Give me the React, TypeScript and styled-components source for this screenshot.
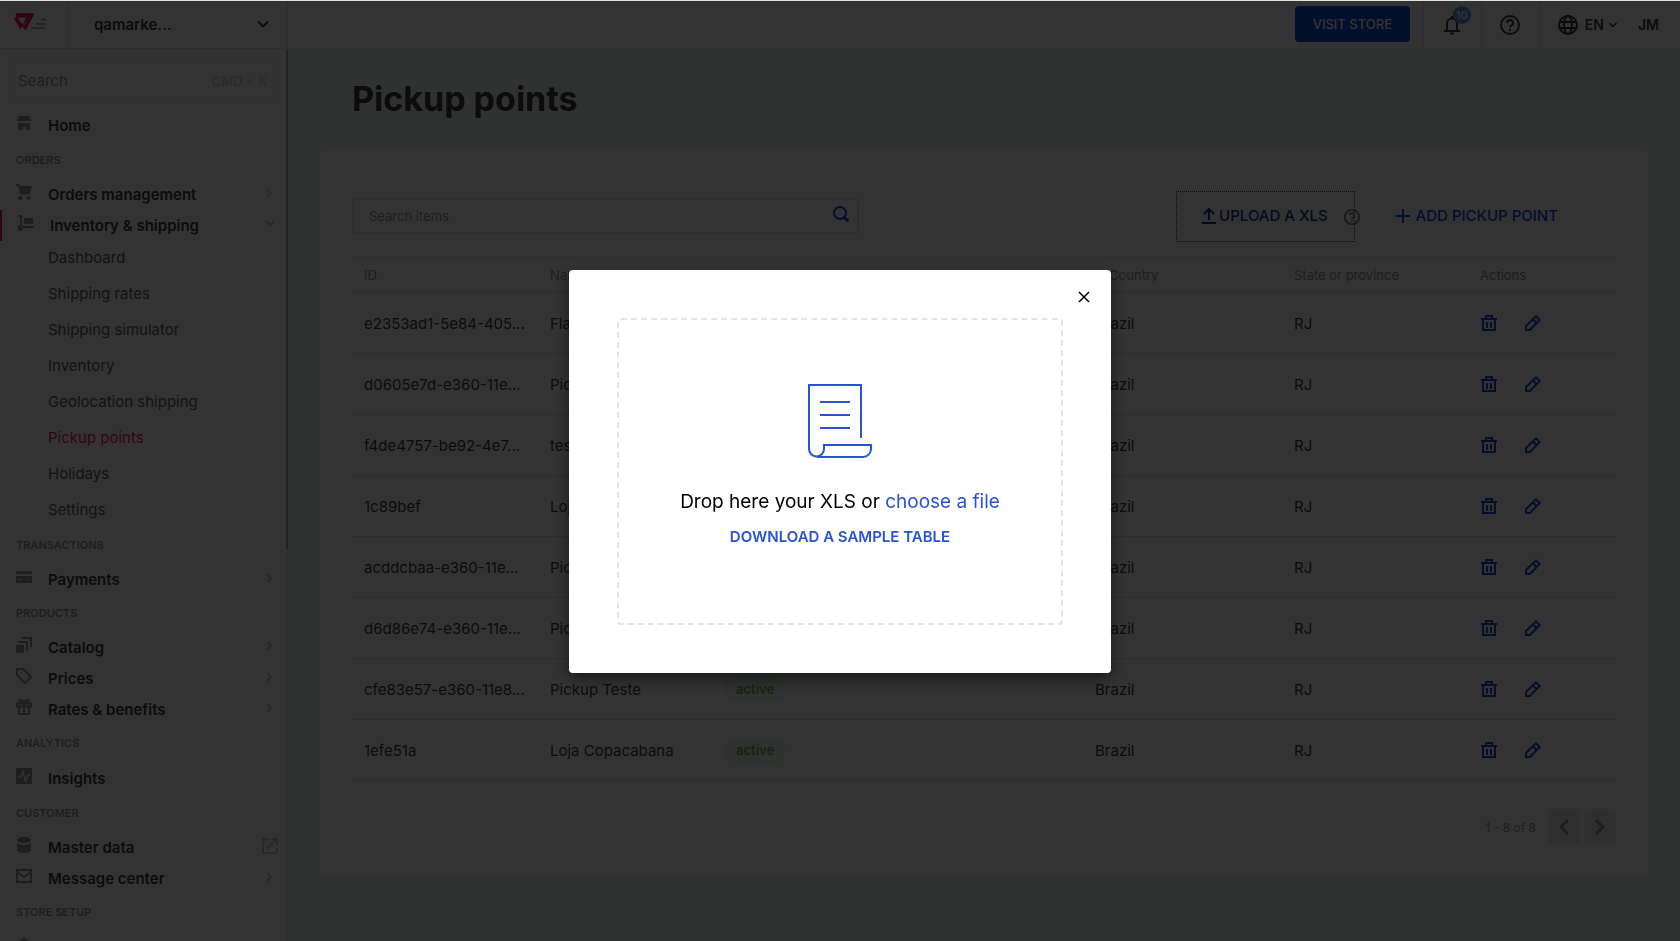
import React from "react";
import styled, { createGlobalStyle } from "styled-components";

const c = {
  text: "#3f3f40",
  soft: "#5e6062",
  muted: "#979899",
  faint: "#cacbcc",
  line: "#e3e4e6",
  blue: "#134cd8",
  blueDark: "#0c389f",
  link: "#2953d4",
  pink: "#f71963",
  base: "#f0f4f3",
};

const GlobalStyle = createGlobalStyle`
  * { box-sizing: border-box; }
  body { margin: 0; background: ${c.base}; color: ${c.text}; font-family: Inter, "Liberation Sans", sans-serif; font-size: 15px; }
  button, input { font: inherit; color: inherit; }
  button { background: none; border: 0; padding: 0; cursor: pointer; }
  a { color: inherit; text-decoration: none; }
  ul { list-style: none; margin: 0; padding: 0; }
  svg { display: block; flex: none; }
`;

const Shell = styled.div`
  height: 100vh;
  display: flex;
  flex-direction: column;
  overflow: hidden;
`;

const TopBar = styled.header`
  flex: none;
  height: 49px;
  display: flex;
  align-items: stretch;
  background: #fff;
  border-top: 1px solid #dfe4e2;
  border-bottom: 1px solid ${c.line};
`;

const LogoLink = styled.a`
  width: 68px;
  padding: 12px 0 0 14px;
  border-right: 1px solid ${c.line};
`;

const AccountButton = styled.button`
  width: 220px;
  padding: 0 18px 0 26px;
  display: flex;
  align-items: center;
  justify-content: space-between;
  border-right: 1px solid ${c.line};
  font-weight: 600;
`;

const TopActions = styled.div`
  margin-left: auto;
  display: flex;
  align-items: stretch;
`;

const VisitStore = styled.a`
  width: 115px;
  height: 36px;
  margin: 5px 13px 0 0;
  border-radius: 4px;
  background: ${c.blue};
  color: #fff;
  font-size: 13px;
  font-weight: 500;
  line-height: 36px;
  text-align: center;
`;

const IconCell = styled.button`
  position: relative;
  width: 58px;
  display: flex;
  align-items: center;
  justify-content: center;
  border-left: 1px solid ${c.line};
`;

const Count = styled.span`
  position: absolute;
  top: 5px;
  left: 29px;
  width: 18px;
  height: 18px;
  border-radius: 9px;
  background: #5a9ff5;
  color: #fff;
  font-size: 11px;
  font-weight: 500;
  line-height: 18px;
  text-align: center;
`;

const LangButton = styled.button`
  display: flex;
  align-items: center;
  gap: 5px;
  padding: 0 21px 0 18px;
  border-left: 1px solid ${c.line};
  font-size: 14px;
  font-weight: 600;
  svg:first-child { margin-right: 2px; }
`;

const UserButton = styled.button`
  padding-right: 21px;
  font-size: 14px;
  font-weight: 600;
`;

const Body = styled.div`
  flex: 1;
  min-height: 0;
  display: flex;
`;

const Sidebar = styled.aside`
  position: relative;
  flex: none;
  width: 288px;
  overflow: hidden;
  background: #fff;
  box-shadow: inset -1px 0 ${c.line};
`;

const ScrollThumb = styled.div`
  position: absolute;
  top: 0;
  right: 0;
  width: 2px;
  height: 56%;
  background: #a8a9aa;
`;

const SideSearch = styled.label`
  height: 37px;
  margin: 13px 9px 10px 9px;
  padding: 0 11px 0 8px;
  display: flex;
  align-items: center;
  border: 1px solid #edeeef;
  border-radius: 4px;
  input {
    flex: 1;
    min-width: 0;
    padding: 0;
    border: 0;
    outline: 0;
    background: none;
    &::placeholder { color: ${c.muted}; opacity: 1; }
  }
`;

const Shortcut = styled.span`
  color: #d4d5d6;
  font-size: 13px;
  font-weight: 600;
`;

const GroupLabel = styled.h2`
  margin: 0;
  padding: 10px 16px 11px;
  color: ${c.muted};
  font-size: 11px;
  font-weight: 600;
  line-height: 16px;
`;

const NavLink = styled.a<{ $single?: boolean; $active?: boolean }>`
  height: ${(p) => (p.$single ? 33 : 31)}px;
  padding: 0 10px 0 16px;
  border-left: ${(p) => (p.$active ? 2 : 0)}px solid ${c.pink};
  display: flex;
  align-items: center;
  gap: 16px;
  color: ${c.text};
  font-weight: 600;
`;

const NavIcon = styled.span`
  padding-bottom: 5px;
  color: ${c.muted};
`;

const NavTail = styled.span`
  width: 16px;
  margin-left: auto;
  padding-bottom: 3px;
  display: flex;
  justify-content: center;
  color: ${c.faint};
`;

const SubList = styled.ul`
  margin: -1px 0;
`;

const SubLink = styled.a<{ $current: boolean }>`
  display: block;
  padding-left: 48px;
  line-height: 36px;
  color: ${(p) => (p.$current ? c.pink : c.soft)};
`;

const Main = styled.main`
  flex: 1;
  min-width: 0;
  padding: 26px 32px 0;
`;

const Title = styled.h1`
  margin: 0 0 27px 32px;
  font-size: 34px;
  font-weight: 700;
  line-height: 48px;
`;

const Card = styled.section`
  padding: 41px 32px 32px;
  border-radius: 8px;
  background: #fff;
`;

const Toolbar = styled.div`
  display: flex;
  align-items: center;
  height: 51px;
  margin-bottom: 15px;
  padding-right: 58px;
`;

const TableSearch = styled.label`
  width: 42%;
  height: 36px;
  margin-bottom: 2px;
  padding: 0 8px 4px 15px;
  display: flex;
  align-items: center;
  border: 2px solid ${c.line};
  border-radius: 4px;
  color: ${c.blue};
  input {
    flex: 1;
    min-width: 0;
    padding: 4px 0 0;
    border: 0;
    outline: 0;
    background: none;
    color: ${c.text};
    font-size: 13px;
    &::placeholder { color: ${c.muted}; opacity: 1; }
  }
`;

const UploadButton = styled.button`
  height: 51px;
  margin-left: auto;
  padding: 0 26px 2px 25px;
  display: flex;
  align-items: center;
  gap: 3px;
  border: 1px dotted ${c.blueDark};
  color: ${c.blueDark};
  font-weight: 500;
`;

const HelpButton = styled.button`
  margin: 0 36px 0 -11px;
  color: #727273;
`;

const AddButton = styled.button`
  padding-bottom: 2px;
  display: flex;
  align-items: center;
  gap: 6px;
  color: ${c.blue};
  font-weight: 500;
`;

const Table = styled.table`
  width: 100%;
  table-layout: fixed;
  border-collapse: collapse;
  border-top: 1px solid ${c.line};
`;

const Col = styled.col<{ $w: number }>`
  width: ${(p) => p.$w}px;
`;

const Th = styled.th<{ $pad?: number }>`
  height: 35px;
  padding: 0 12px 0 ${(p) => p.$pad ?? 12}px;
  border-bottom: 1px solid ${c.line};
  color: ${c.muted};
  font-size: 13px;
  font-weight: 400;
  text-align: left;
`;

const Td = styled.td<{ $pad?: number }>`
  height: 61px;
  padding: 0 12px 0 ${(p) => p.$pad ?? 12}px;
  border-bottom: 1px solid ${c.line};
  overflow: hidden;
  white-space: nowrap;
`;

const Badge = styled.span`
  display: inline-block;
  padding: 0 12px;
  border-radius: 13px;
  background: #eef7ea;
  color: #79b03a;
  font-size: 13px;
  font-weight: 600;
  line-height: 25px;
`;

const RowActions = styled.div`
  display: flex;
  gap: 28px;
  padding-left: 1px;
  color: ${c.blue};
`;

const Pager = styled.nav`
  margin-top: 28px;
  display: flex;
  align-items: center;
  justify-content: flex-end;
  gap: 4px;
  color: #727273;
`;

const PagerCount = styled.span`
  margin-right: 8px;
  color: ${c.muted};
  font-size: 12px;
`;

const PageButton = styled.button`
  width: 32px;
  height: 36px;
  display: flex;
  align-items: center;
  justify-content: center;
  border-radius: 4px;
  background: #e3e9e7;
  color: ${c.muted};
`;

const Overlay = styled.div`
  position: fixed;
  inset: 1px 0 0;
  display: flex;
  align-items: center;
  justify-content: center;
  background: rgba(0, 0, 0, 0.8);
`;

const Modal = styled.div`
  position: relative;
  width: 542px;
  max-width: 100%;
  padding: 48px;
  border-radius: 4px;
  background: #fff;
  color: #000;
  box-shadow: 0 6px 16px rgba(0, 0, 0, 0.5);
`;

const CloseButton = styled.button`
  position: absolute;
  top: 19px;
  right: 19px;
  padding: 2px;
`;

const DropZone = styled.div`
  height: 307px;
  padding-top: 64px;
  display: flex;
  flex-direction: column;
  align-items: center;
  border: 2px dashed ${c.line};
  border-radius: 4px;
`;

const DropText = styled.p`
  margin: 30px 0 7px;
  font-size: 19px;
  line-height: 28px;
`;

const ChooseFile = styled.label`
  color: ${c.link};
  cursor: pointer;
  input { display: none; }
`;

const SampleLink = styled.a`
  color: ${c.link};
  font-weight: 600;
  line-height: 28px;
`;

type ChevronProps = { w: number; h: number; d: string; s?: number };
const Chevron = ({ w, h, d, s = 2 }: ChevronProps) => (
  <svg width={w} height={h} viewBox={`0 0 ${w} ${h}`} fill="none" stroke="currentColor" strokeWidth={s}>
    <path d={d} />
  </svg>
);

const Filled = ({ children }: { children: React.ReactNode }) => (
  <svg width="16" height="16" viewBox="0 0 16 16" fill="currentColor">{children}</svg>
);

const Outline = ({ children }: { children: React.ReactNode }) => (
  <svg width="16" height="16" viewBox="0 0 16 16" fill="none" stroke="currentColor" strokeWidth="2">{children}</svg>
);

const icons: Record<string, React.ReactNode> = {
  home: <Filled><path d="M3 1h10l2 5H1zM2 8h12v7H10v-3H7v3H2z" /></Filled>,
  cart: <Filled><path d="M0 0h3l1.3 2H16l-2.2 8.500H4.500L2 2H0z" /><circle cx="4.500" cy="14" r="2" /><circle cx="12.500" cy="14" r="2" /></Filled>,
  dolly: <Filled><path d="M0 0h4v11h12v2H5a3 3 0 1 1-3-3V2H0zM6 3h9v6H6z" /></Filled>,
  card: <Filled><path d="M0 2h16v3H0zM0 7h16v7H0zM2 10v1h4v-1zM12 10v1h2v-1z" fillRule="evenodd" /></Filled>,
  catalog: <Filled><path d="M0 8h8v8H1a1 1 0 0 1-1-1zM2 4h10v10h-2V6H2zM6 0h10v10h-2V2H6z" /></Filled>,
  tag: <Outline><path d="M1 1h6l8 8-6 6-8-8z" /><circle cx="5" cy="5" r="1" fill="currentColor" stroke="none" /></Outline>,
  gift: <Outline><path d="M1 4.500h14v3H1zM3 8v7h10V8M8 4v11M8 4C6 0 3 0 3.500 4M8 4c2-4 5-4 4.500 0" /></Outline>,
  pulse: <Filled><path d="M0 0h16v16H0z" /><path d="M2 9h2.500L7 4l2.500 9L12 7h2" fill="none" stroke="#fff" strokeWidth="1.500" /></Filled>,
  data: <Filled><ellipse cx="8" cy="3" rx="7" ry="3" /><path d="M1 6c3 2.500 11 2.500 14 0v7c-1 4-13 4-14 0z" /></Filled>,
  mail: <Outline><path d="M1 2h14v12H1zM1 4l7 5 7-5" /></Outline>,
  gear: <Filled><path d="M8 2l7 4v8l-7 4-7-4V6z" /></Filled>,
};

const chevronRight = <Chevron w={8} h={10} d="M1 1l4 4-4 4" />;
const chevronDown = <Chevron w={10} h={8} d="M1 1l4 4 4-4" />;
const external = (
  <Outline><path d="M6 1H1v14h14v-5M9 1h6v6M15 1L5 11" /></Outline>
);

const HelpIcon = ({ size }: { size: number }) => (
  <svg width={size} height={size} viewBox="0 0 20 20" fill="none" stroke="currentColor" strokeWidth="2">
    <circle cx="10" cy="10" r="9" />
    <path d="M7 8a3 3 0 1 1 4.500 2.500C10.300 11.200 10 11.600 10 12.500" />
    <path d="M10 14v2" />
  </svg>
);

type Item = { icon: string; label?: string; single?: boolean; active?: boolean; tail?: React.ReactNode; sub?: string[] };
type Group = { label?: string; items: Item[] };

const groups: Group[] = [
  { items: [{ icon: "home", label: "Home", single: true }] },
  {
    label: "ORDERS",
    items: [
      { icon: "cart", label: "Orders management", tail: chevronRight },
      {
        icon: "dolly", label: "Inventory & shipping", active: true, tail: chevronDown,
        sub: ["Dashboard", "Shipping rates", "Shipping simulator", "Inventory", "Geolocation shipping", "Pickup points", "Holidays", "Settings"],
      },
    ],
  },
  { label: "TRANSACTIONS", items: [{ icon: "card", label: "Payments", tail: chevronRight }] },
  {
    label: "PRODUCTS",
    items: [
      { icon: "catalog", label: "Catalog", tail: chevronRight },
      { icon: "tag", label: "Prices", tail: chevronRight },
      { icon: "gift", label: "Rates & benefits", tail: chevronRight },
    ],
  },
  { label: "ANALYTICS", items: [{ icon: "pulse", label: "Insights", single: true }] },
  {
    label: "CUSTOMER",
    items: [
      { icon: "data", label: "Master data", tail: external },
      { icon: "mail", label: "Message center", tail: chevronRight },
    ],
  },
  { label: "STORE SETUP", items: [{ icon: "gear" }] },
];

type Point = { id: string; name: string; status?: string };

const points: Point[] = [
  { id: "e2353ad1-5e84-405...", name: "Flamengo" },
  { id: "d0605e7d-e360-11e...", name: "Pickup" },
  { id: "f4de4757-be92-4e7...", name: "teste" },
  { id: "1c89bef", name: "Loja" },
  { id: "acddcbaa-e360-11e...", name: "Pickup" },
  { id: "d6d86e74-e360-11e...", name: "Pickup" },
  { id: "cfe83e57-e360-11e8...", name: "Pickup Teste", status: "active" },
  { id: "1efe51a", name: "Loja Copacabana", status: "active" },
];

export default function App() {
  return (
    <Shell>
      <GlobalStyle />
      <TopBar>
        <LogoLink href="#" aria-label="VTEX admin">
          <svg width="32" height="18" viewBox="0 0 32 18">
            <path d="M3 0h15.500c1.200 0 1.800 1 1.200 2.200L12.500 16c-.6 1.200-1.900 1.200-2.500 0L8.500 13 7.500 15c-.5 1-1.500 1-2 0L.4 6.500C-.3 5 .2 4.200 1.500 4.200h1L1.800 2C1.300 1 1.800 0 3 0z" fill={c.pink} />
            <path d="M4 5h7.500L8.500 11zM9.500 13l2.500-5" fill="#fff" stroke="#fff" strokeWidth="0.600" />
            <path d="M27 6.500h5M22 11h10M17 15h15" stroke="#979899" strokeWidth="1.500" />
          </svg>
        </LogoLink>
        <AccountButton>
          qamarke...
          <Chevron w={12} h={9} d="M1 1.500l5 5 5-5" />
        </AccountButton>
        <TopActions>
          <VisitStore href="#">VISIT STORE</VisitStore>
          <IconCell aria-label="Notifications">
            <svg width="16" height="20" viewBox="0 0 16 20" fill="none" stroke="currentColor" strokeWidth="2">
              <path d="M3 15V8.500a5 5 0 0 1 10 0V15M0 16h16M8 1v3" />
              <path d="M6 18.500h4" />
            </svg>
            <Count>10</Count>
          </IconCell>
          <IconCell aria-label="Help"><HelpIcon size={20} /></IconCell>
          <LangButton>
            <svg width="20" height="20" viewBox="0 0 20 20" fill="none" stroke="currentColor" strokeWidth="2">
              <circle cx="10" cy="10" r="9" />
              <ellipse cx="10" cy="10" rx="4" ry="9" />
              <path d="M1.500 7h17M1.500 13h17" />
            </svg>
            EN
            <Chevron w={8} h={6} d="M0.500 1l3.500 3.500L7.500 1" s={1.5} />
          </LangButton>
          <UserButton>JM</UserButton>
        </TopActions>
      </TopBar>
      <Body>
        <Sidebar>
          <SideSearch>
            <input type="text" placeholder="Search" aria-label="Search" />
            <Shortcut>CMD + K</Shortcut>
          </SideSearch>
          <nav>
            {groups.map((g, i) => (
              <section key={i}>
                {g.label && <GroupLabel>{g.label}</GroupLabel>}
                <ul>
                  {g.items.map((item) => (
                    <li key={item.icon}>
                      <NavLink href="#" $single={item.single} $active={item.active} aria-label={item.label ?? "Store setup"}>
                        <NavIcon>{icons[item.icon]}</NavIcon>
                        {item.label}
                        {item.tail && <NavTail>{item.tail}</NavTail>}
                      </NavLink>
                      {item.sub && (
                        <SubList>
                          {item.sub.map((s) => (
                            <li key={s}><SubLink href="#" $current={s === "Pickup points"}>{s}</SubLink></li>
                          ))}
                        </SubList>
                      )}
                    </li>
                  ))}
                </ul>
              </section>
            ))}
          </nav>
          <ScrollThumb />
        </Sidebar>
        <Main>
          <Title>Pickup points</Title>
          <Card>
            <Toolbar>
              <TableSearch>
                <input type="text" placeholder="Search items" aria-label="Search items" />
                <svg width="16" height="16" viewBox="0 0 16 16" fill="none" stroke="currentColor">
                  <circle cx="7" cy="7" r="6" strokeWidth="2" />
                  <path d="M11.500 11.500l3 3" strokeWidth="3" strokeLinecap="round" />
                </svg>
              </TableSearch>
              <UploadButton>
                <svg width="14" height="16" viewBox="0 0 14 16" fill="none" stroke="currentColor" strokeWidth="2">
                  <path d="M7 12V2M2 6l5-5 5 5M0 15h14" />
                </svg>
                UPLOAD A XLS
              </UploadButton>
              <HelpButton aria-label="About the XLS upload"><HelpIcon size={16} /></HelpButton>
              <AddButton>
                <svg width="14" height="14" viewBox="0 0 14 14" stroke="currentColor" strokeWidth="2"><path d="M7 0v14M0 7h14" /></svg>
                ADD PICKUP POINT
              </AddButton>
            </Toolbar>
            <Table>
              <colgroup>
                {[186, 186, 160, 199, 199, 186, 148].map((w, i) => <Col key={i} $w={w} />)}
              </colgroup>
              <thead>
                <tr>
                  <Th>ID</Th>
                  <Th>Name</Th>
                  <Th $pad={0}>Status</Th>
                  <Th>Address</Th>
                  <Th $pad={26}>Country</Th>
                  <Th>State or province</Th>
                  <Th>Actions</Th>
                </tr>
              </thead>
              <tbody>
                {points.map(({ id, name, status }) => (
                  <tr key={id}>
                    <Td>{id}</Td>
                    <Td>{name}</Td>
                    <Td $pad={0}>{status && <Badge>{status}</Badge>}</Td>
                    <Td />
                    <Td>Brazil</Td>
                    <Td>RJ</Td>
                    <Td>
                      <RowActions>
                        <button aria-label={`Delete ${id}`}>
                          <Outline><path d="M0 4h16M5 4V1h6v3M2 4v11h12V4M6 7v6M10 7v6" /></Outline>
                        </button>
                        <button aria-label={`Edit ${id}`}>
                          <Outline><path d="M1 15v-4L11 1.400 14.600 5 5 15zM8 4.500L11.500 8" /></Outline>
                        </button>
                      </RowActions>
                    </Td>
                  </tr>
                ))}
              </tbody>
            </Table>
            <Pager aria-label="Pages">
              <PagerCount>1 - 8 of 8</PagerCount>
              <PageButton aria-label="Previous page"><Chevron w={10} h={16} d="M9 1L2 8l7 7" s={3} /></PageButton>
              <PageButton aria-label="Next page"><Chevron w={10} h={16} d="M1 1l7 7-7 7" s={3} /></PageButton>
            </Pager>
          </Card>
        </Main>
      </Body>
      <Overlay>
        <Modal role="dialog" aria-modal="true" aria-label="Upload a XLS">
          <CloseButton aria-label="Close">
            <svg width="12" height="12" viewBox="0 0 12 12" stroke="currentColor" strokeWidth="1.500"><path d="M1 1l10 10M11 1L1 11" /></svg>
          </CloseButton>
          <DropZone>
            <svg width="64" height="74" viewBox="0 0 64 74" fill="none" stroke={c.link} strokeWidth="2">
              <path d="M53 54V1H1v64a7.500 7.500 0 0 0 15 0V61h47v4a8 8 0 0 1-8 8H9" />
              <path d="M12 18h30M12 31h30M12 44h30" />
            </svg>
            <DropText>
              Drop here your XLS or <ChooseFile>choose a file<input type="file" accept=".xls" /></ChooseFile>
            </DropText>
            <SampleLink href="#">DOWNLOAD A SAMPLE TABLE</SampleLink>
          </DropZone>
        </Modal>
      </Overlay>
    </Shell>
  );
}
